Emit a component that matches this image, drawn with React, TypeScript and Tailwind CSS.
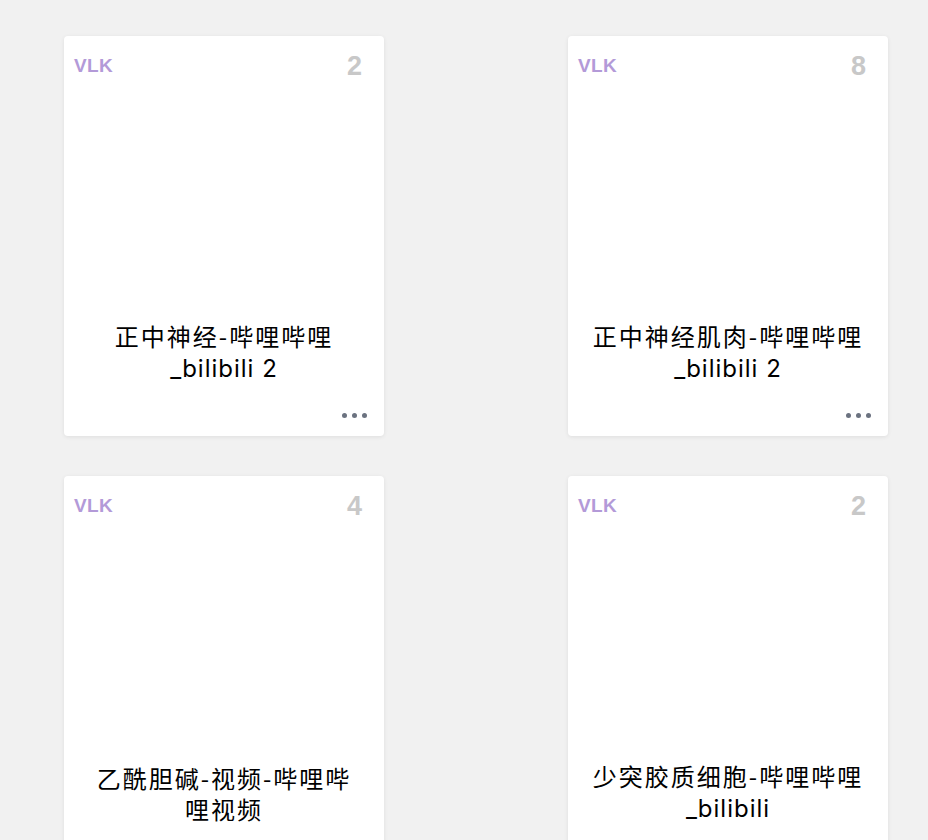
import React from "react";

type Card = { tag: string; count: number; title: string };

const cards: Card[] = [
  { tag: "VLK", count: 2, title: "正中神经-哔哩哔哩_bilibili 2" },
  { tag: "VLK", count: 8, title: "正中神经肌肉-哔哩哔哩_bilibili 2" },
  { tag: "VLK", count: 4, title: "乙酰胆碱-视频-哔哩哔哩视频" },
  { tag: "VLK", count: 2, title: "少突胶质细胞-哔哩哔哩_bilibili" },
];

// latin runs use a latin font with less tracking than the CJK runs
function Title({ text }: { text: string }) {
  const parts = text.split(/([A-Za-z0-9_ ]+)/).filter(Boolean);
  return (
    <>
      {parts.map((p, i) =>
        /^[A-Za-z0-9_ ]+$/.test(p) ? (
          <span key={i} className="tracking-[1px] font-['Inter',sans-serif]">
            {p}
          </span>
        ) : (
          <span key={i}>{p}</span>
        )
      )}
    </>
  );
}

function DeckCard({ card }: { card: Card }) {
  return (
    <div className="w-[320px] h-[400px] bg-white rounded-[4px] shadow-[0_1px_4px_rgba(0,0,0,0.08)] flex flex-col">
      <div className="flex items-start justify-between pl-[10px] pr-[22px] pt-[18px]">
        <span className="text-[19px] leading-[24px] font-bold text-[#b39ad8] font-['Liberation_Sans',sans-serif] tracking-[0.3px]">
          {card.tag}
        </span>
        <span className="text-[27px] leading-[26px] font-bold text-[#c8c8c8] font-['Liberation_Sans',sans-serif] -mt-[1px]">
          {card.count}
        </span>
      </div>
      <div className="flex-1" />
      <div className="px-6 text-center text-[24px] leading-[31px] tracking-[2px] text-black font-['Noto_Sans_CJK_SC',sans-serif] break-words">
        <Title text={card.title} />
      </div>
      <div className="h-[52px] flex items-center justify-end pr-[17px] pt-[10px]">
        <div className="flex gap-[5px]">
          <span className="w-[5px] h-[5px] rounded-full bg-[#6b7280]" />
          <span className="w-[5px] h-[5px] rounded-full bg-[#6b7280]" />
          <span className="w-[5px] h-[5px] rounded-full bg-[#6b7280]" />
        </div>
      </div>
    </div>
  );
}

export default function App() {
  return (
    <div className="min-h-screen bg-[#f1f1f1] pl-[64px] pt-[36px] pb-10">
      <div className="grid grid-cols-[320px_320px] gap-x-[184px] gap-y-[40px]">
        {cards.map((c, i) => (
          <DeckCard key={i} card={c} />
        ))}
      </div>
    </div>
  );
}
